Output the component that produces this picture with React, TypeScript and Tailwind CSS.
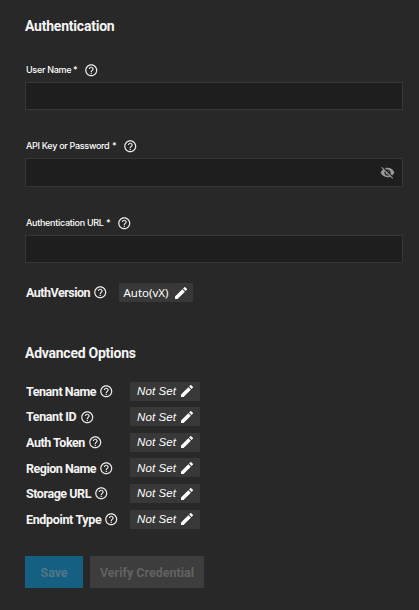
import { useState } from "react";
import { MdEdit, MdHelpOutline, MdVisibilityOff } from "react-icons/md";

function Help() {
  return <MdHelpOutline className="size-[14.5px] shrink-0 text-[#eeeeee]" />;
}

type FieldProps = { label: string; type?: string; width: string; tracking: string; box: string };

function Field({ label, type = "text", width, tracking, box }: FieldProps) {
  const [value, setValue] = useState("");
  return (
    <div>
      <div className="flex h-3 items-center pl-px font-[Inter,sans-serif] text-[9px] leading-3 font-medium text-white">
        <span className={`whitespace-nowrap ${width} ${tracking}`}>{label}</span>
        <span className="mr-[6px] w-[5px]">*</span>
        <Help />
      </div>
      <div className={`mt-1.5 flex w-[378px] items-center border border-[#363636] bg-[#1e1e1e] ${box}`}>
        <input
          aria-label={label}
          type={type}
          value={value}
          onChange={(e) => setValue(e.target.value)}
          className="h-full min-w-0 flex-1 bg-transparent px-2 text-xs text-white outline-none"
        />
        {type === "password" && <MdVisibilityOff className="mr-[7px] size-[15px] text-[#9a9a9a]" />}
      </div>
    </div>
  );
}

const options = [
  { label: "Tenant Name", tracking: "tracking-[-0.45px]", width: "w-[73px]" },
  { label: "Tenant ID", tracking: "tracking-[-0.38px]", width: "w-[54px]" },
  { label: "Auth Token", tracking: "tracking-[-0.45px]", width: "w-[62px]" },
  { label: "Region Name", tracking: "tracking-[-0.5px]", width: "w-[73px]" },
  { label: "Storage URL", tracking: "tracking-[-0.45px]", width: "w-[68px]" },
  { label: "Endpoint Type", tracking: "tracking-[-0.34px]", width: "w-[78px]" },
];

export default function App() {
  return (
    <main className="h-[610px] w-[419px] overflow-hidden bg-[#282828] pl-[25px] font-[Roboto,sans-serif] text-[#f4f4f4]">
      <h2 className="pt-4 text-[14px] leading-5 font-bold tracking-[-0.22px]">Authentication</h2>
      <div className="mt-7 flex flex-col gap-[30px]">
        <Field label="User Name" width="w-[47px]" tracking="tracking-[-0.3px]" box="h-7" />
        <Field label="API Key or Password" type="password" width="w-[86px]" tracking="tracking-[-0.3px]" box="h-[29px]" />
        <Field label="Authentication URL" width="w-[80px]" tracking="tracking-[-0.29px]" box="h-7" />
      </div>
      <div className="mt-5 flex h-[19px] items-center pl-px text-[12.5px] font-bold">
        <span className="w-[67px] pt-px tracking-[-0.5px]">AuthVersion</span>
        <Help />
        <button className="ml-[11px] flex h-[19px] w-[74px] items-center justify-between bg-[#383838] pr-1 pl-[5px] font-['Noto_Sans',sans-serif] text-[11.5px] font-normal text-white">
          Auto(vX)
          <MdEdit className="size-4" />
        </button>
      </div>
      <h2 className="mt-[41px] text-[14px] leading-5 font-bold tracking-[-0.25px]">Advanced Options</h2>
      <div className="mt-[18.7px] flex flex-col gap-[6.6px]">
        {options.map((o) => (
          <div key={o.label} className="flex h-[19px] items-center pl-px text-[12.5px] font-bold">
            <div className="flex w-[104px] items-center">
              <span className={`pt-[2px] whitespace-nowrap ${o.width} ${o.tracking}`}>{o.label}</span>
              <Help />
            </div>
            <button className="flex h-[19px] w-[70px] items-center justify-between bg-[#383838] pr-[5px] pl-[7px] font-['Liberation_Sans',sans-serif] text-[11.5px] font-normal tracking-[0.1px] text-white italic">
              <span className="pt-px">Not Set</span>
              <MdEdit className="size-4" />
            </button>
          </div>
        ))}
      </div>
      <div className="mt-[27.3px] flex gap-[7px] text-[12.5px] font-bold">
        <button className="h-8 w-[58px] bg-[#155f82] pt-0.5 tracking-[-0.1px] text-[#527786]">Save</button>
        <button className="h-8 w-[114px] bg-[#3d3d3d] pt-0.5 text-[#626262]">Verify Credential</button>
      </div>
    </main>
  );
}
